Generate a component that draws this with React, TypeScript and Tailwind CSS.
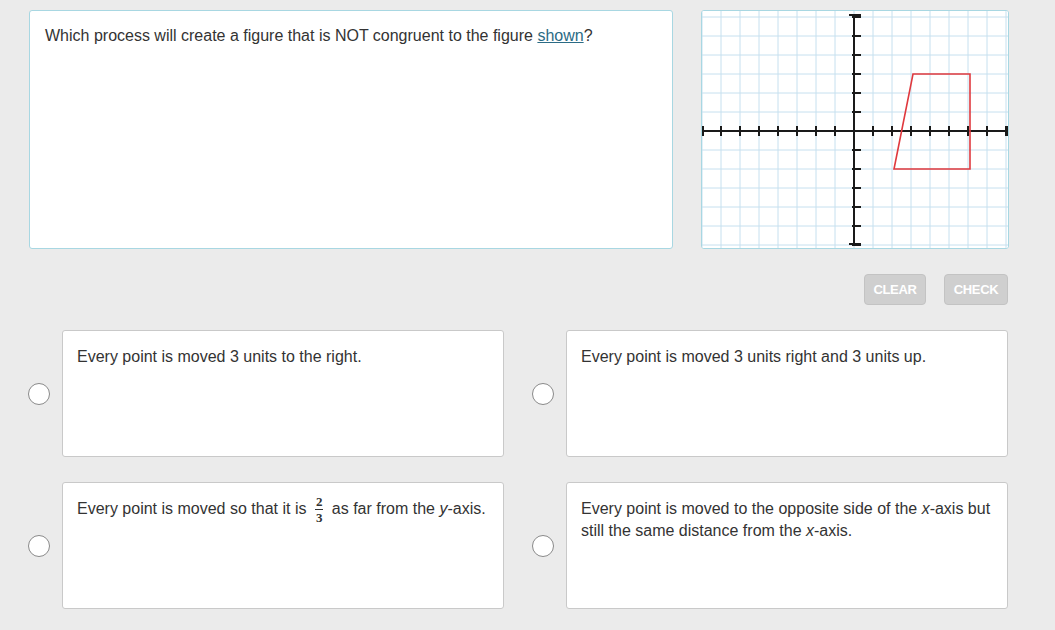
import React from 'react';

const O = { x: 152, y: 120 };
const U = 19;

function Graph() {
  const vx: number[] = [];
  for (let k = -8; k <= 8; k++) vx.push(O.x + k * U);
  const hy: number[] = [];
  for (let k = -6; k <= 6; k++) hy.push(O.y + k * U);
  const pts = [
    [3, 3],
    [6, 3],
    [6, -2],
    [2, -2],
  ]
    .map(([a, b]) => `${O.x + a * U + 2},${O.y - b * U}`)
    .join(' ');

  return (
    <svg width="306" height="237" viewBox="0 0 306 237">
      <rect width="306" height="237" fill="#fff" />
      {vx.map((x) => (
        <line key={'v' + x} x1={x} y1={0} x2={x} y2={237} stroke="#c6e0ef" strokeWidth="1" />
      ))}
      {hy.map((y) => (
        <line key={'h' + y} x1={0} y1={y} x2={306} y2={y} stroke="#c6e0ef" strokeWidth="1" />
      ))}
      {/* axes */}
      <line x1={1} y1={O.y} x2={305} y2={O.y} stroke="#1a1a1a" strokeWidth="2" />
      <line x1={O.x} y1={4} x2={O.x} y2={233} stroke="#1a1a1a" strokeWidth="2" />
      {vx.map((x) =>
        x === O.x ? null : (
          <line key={'tx' + x} x1={x} y1={O.y - 5} x2={x} y2={O.y + 5} stroke="#1a1a1a" strokeWidth="2" />
        )
      )}
      <line x1={1} y1={O.y - 5} x2={1} y2={O.y + 5} stroke="#1a1a1a" strokeWidth="2" />
      <line x1={305} y1={O.y - 5} x2={305} y2={O.y + 5} stroke="#1a1a1a" strokeWidth="2" />
      {hy.map((y) =>
        y === O.y ? null : (
          <line key={'ty' + y} x1={O.x - 2} y1={y} x2={O.x + 7} y2={y} stroke="#1a1a1a" strokeWidth="2" />
        )
      )}
      <line x1={O.x - 5} y1={4} x2={O.x + 7} y2={4} stroke="#1a1a1a" strokeWidth="2" />
      <line x1={O.x - 5} y1={233} x2={O.x + 7} y2={233} stroke="#1a1a1a" strokeWidth="2" />
      <polygon points={pts} fill="none" stroke="#e0393e" strokeWidth="1.6" />
    </svg>
  );
}

function Frac() {
  return (
    <span className="inline-flex flex-col items-center align-middle mx-[4px] -my-[6px] leading-none text-[13px] font-['Liberation_Serif',serif] font-bold">
      <span className="border-b border-[#333] px-[1px] pb-[1px]">2</span>
      <span className="pt-[1px]">3</span>
    </span>
  );
}

function Choice({ children }: { children: React.ReactNode }) {
  return (
    <div className="flex items-center gap-[12px]">
      <div className="w-[22px] h-[22px] rounded-full border border-[#8a8a8a] bg-white shrink-0" />
      <div className="w-[442px] h-[127px] bg-white border border-[#c9c9c9] rounded-[3px] pl-[14px] pr-[12px] pt-[15px] text-[16px] leading-[22px] text-[#333]">
        {children}
      </div>
    </div>
  );
}

export default function App() {
  return (
    <div className="w-[1055px] h-[630px] bg-[#ebebeb] font-['Liberation_Sans',Arial,sans-serif] overflow-hidden">
      <div className="flex pl-[29px] pt-[10px] gap-[28px]">
        <div className="w-[644px] h-[239px] bg-white border border-[#a8d7e2] rounded-[3px] px-[15px] pt-[13px] text-[16px] text-[#333]">
          Which process will create a figure that is NOT congruent to the figure{' '}
          <span className="underline text-[#2b6b85]">shown</span>?
        </div>
        <div className="w-[308px] h-[239px] border border-[#a8d7e2] rounded-[3px] bg-white overflow-hidden">
          <Graph />
        </div>
      </div>

      <div className="flex justify-end gap-[18px] pr-[47px] mt-[25px]">
        <button className="w-[62px] h-[31px] rounded-[4px] bg-[#cfcfcf] border border-[#c3c3c3] text-white text-[13px] font-bold tracking-tight">
          CLEAR
        </button>
        <button className="w-[64px] h-[31px] rounded-[4px] bg-[#cfcfcf] border border-[#c3c3c3] text-white text-[13px] font-bold tracking-tight">
          CHECK
        </button>
      </div>

      <div className="grid grid-cols-[476px_476px] gap-x-[28px] gap-y-[25px] pl-[28px] mt-[25px]">
        <Choice>Every point is moved 3 units to the right.</Choice>
        <Choice>Every point is moved 3 units right and 3 units up.</Choice>
        <Choice>
          Every point is moved so that it is <Frac /> as far from the <i>y</i>-axis.
        </Choice>
        <Choice>
          Every point is moved to the opposite side of the <i>x</i>-axis but still the same distance from the <i>x</i>-axis.
        </Choice>
      </div>
    </div>
  );
}
